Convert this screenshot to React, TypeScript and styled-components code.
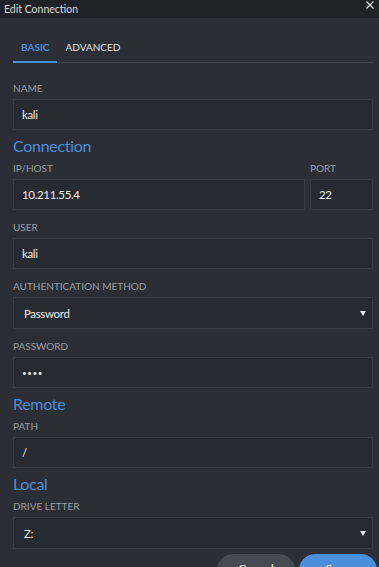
import React, { useState } from 'react';
import styled, { createGlobalStyle } from 'styled-components';

const GlobalStyle = createGlobalStyle`
  html, body {
    margin: 0;
    padding: 0;
    background: #2b2e35;
    overflow: hidden;
  }
  * {
    box-sizing: border-box;
  }
`;

const Window = styled.div`
  width: 379px;
  height: 567px;
  overflow: hidden;
  background: #2b2e35;
  font-family: Lato, 'Noto Sans', sans-serif;
  color: #e6e7e9;
`;

const TitleBar = styled.div`
  height: 18px;
  background: #1f2126;
  display: flex;
  align-items: center;
  justify-content: space-between;
  padding: 0 5px 0 4px;
  font-size: 10.5px;
  color: #d8d9db;
`;

const CloseIcon = styled.svg`
  width: 8px;
  height: 8px;
  margin-bottom: 8px;
`;

const Body = styled.div`
  padding: 0 6px 0 13px;
`;

const TabBar = styled.div`
  margin-top: 15px;
  display: flex;
  border-bottom: 1px solid #3d4149;
`;

const Tab = styled.div<{ $active?: boolean }>`
  height: 30px;
  line-height: 28px;
  padding: 0 8px;
  margin-bottom: -1px;
  font-size: 10px;
  font-weight: ${(p) => (p.$active ? 700 : 400)};
  color: ${(p) => (p.$active ? '#4a8fdc' : '#e2e3e5')};
  border-bottom: 2px solid ${(p) => (p.$active ? '#4a8fdc' : 'transparent')};
  cursor: pointer;
`;

const Field = styled.div<{ $gap?: number }>`
  margin-top: ${(p) => p.$gap ?? 10}px;
`;

const Row = styled.div`
  display: flex;
  gap: 5px;
`;

const Label = styled.div`
  font-size: 10px;
  line-height: 14px;
  margin-bottom: 4px;
  color: #9a9ea5;
  text-transform: uppercase;
`;

const Input = styled.div<{ $select?: boolean }>`
  height: ${(p) => (p.$select ? 32 : 31)}px;
  display: flex;
  align-items: center;
  justify-content: space-between;
  padding: 0 6px 0 ${(p) => (p.$select ? 10 : 8)}px;
  background: #272a30;
  border: 1px solid #363a42;
  font-size: 11.5px;
  letter-spacing: -0.35px;
  color: #eceded;
`;

const Dots = styled.span`
  font-size: 8px;
  letter-spacing: 0.6px;
`;

const Arrow = styled.span`
  width: 0;
  height: 0;
  border-left: 3px solid transparent;
  border-right: 3px solid transparent;
  border-top: 5px solid #e6e7e9;
`;

const SectionTitle = styled.div`
  margin-top: 6px;
  font-size: 16px;
  line-height: 20px;
  letter-spacing: -0.3px;
  color: #4a8fdc;
`;

const Footer = styled.div`
  display: flex;
  justify-content: flex-end;
  gap: 4px;
  margin-top: 5px;
  margin-right: -4px;
`;

const Button = styled.button<{ $primary?: boolean }>`
  width: 78px;
  height: 32px;
  padding: 0 0 4px;
  border: none;
  border-radius: 16px;
  font-family: inherit;
  font-size: 12px;
  color: #fff;
  background: ${(p) => (p.$primary ? '#4a8fdc' : '#464a52')};
`;

const App = () => {
  const [tab, setTab] = useState('basic');

  return (
    <Window>
      <GlobalStyle />
      <TitleBar>
        <span>Edit Connection</span>
        <CloseIcon viewBox="0 0 8 8">
          <path d="M0.5 0.5L7.5 7.5M7.5 0.5L0.5 7.5" stroke="#e6e7e9" strokeWidth="1.1" />
        </CloseIcon>
      </TitleBar>
      <Body>
        <TabBar>
          <Tab $active={tab === 'basic'} onClick={() => setTab('basic')}>BASIC</Tab>
          <Tab $active={tab === 'advanced'} onClick={() => setTab('advanced')}>ADVANCED</Tab>
        </TabBar>

        <Field $gap={18}>
          <Label>Name</Label>
          <Input>kali</Input>
        </Field>

        <SectionTitle>Connection</SectionTitle>
        <Row>
          <Field $gap={5} style={{ flex: 1 }}>
            <Label>IP/Host</Label>
            <Input>10.211.55.4</Input>
          </Field>
          <Field $gap={5} style={{ width: 63 }}>
            <Label>Port</Label>
            <Input>22</Input>
          </Field>
        </Row>
        <Field>
          <Label>User</Label>
          <Input>kali</Input>
        </Field>
        <Field>
          <Label>Authentication Method</Label>
          <Input $select>
            Password
            <Arrow />
          </Input>
        </Field>
        <Field>
          <Label>Password</Label>
          <Input>
            <Dots>••••</Dots>
          </Input>
        </Field>

        <SectionTitle>Remote</SectionTitle>
        <Field $gap={5}>
          <Label>Path</Label>
          <Input>/</Input>
        </Field>

        <SectionTitle>Local</SectionTitle>
        <Field $gap={5}>
          <Label>Drive Letter</Label>
          <Input $select>
            Z:
            <Arrow />
          </Input>
        </Field>

        <Footer>
          <Button>Cancel</Button>
          <Button $primary>Save</Button>
        </Footer>
      </Body>
    </Window>
  );
};

export default App;
